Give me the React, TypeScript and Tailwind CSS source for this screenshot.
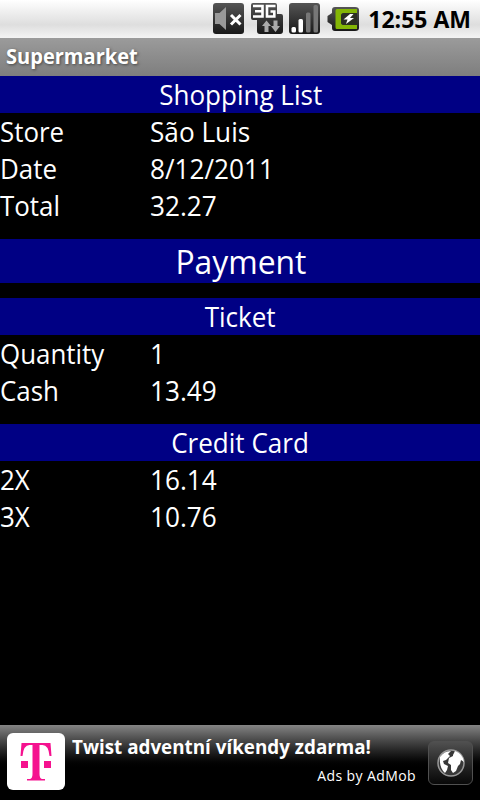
import type { ReactNode } from "react";

interface Row {
  label: string;
  value: string;
}

const purchase: Row[] = [
  { label: "Store", value: "São Luis" },
  { label: "Date", value: "8/12/2011" },
  { label: "Total", value: "32.27" },
];

const ticket: Row[] = [
  { label: "Quantity", value: "1" },
  { label: "Cash", value: "13.49" },
];

const creditCard: Row[] = [
  { label: "2X", value: "16.14" },
  { label: "3X", value: "10.76" },
];

export default function App() {
  return (
    <div className="flex h-[800px] w-[480px] flex-col overflow-hidden bg-black font-['Open_Sans','Noto_Sans',sans-serif] text-white">
      <StatusBar />
      <header className="h-[38px] shrink-0 bg-linear-to-b from-[#9b9b9b] to-[#7e7e7e] pl-1.5">
        <h1 className="origin-left scale-x-[0.955] text-[21px] leading-[36px] font-bold [text-shadow:1px_1px_3px_#444]">
          Supermarket
        </h1>
      </header>
      <main className="flex-1">
        <Section title="Shopping List" rows={purchase} />
        <h2 className="my-[15px] h-11 bg-[#000084] text-center text-[33px] leading-[46px]">
          <span className="ml-px inline-block scale-x-[0.965]">Payment</span>
        </h2>
        <Section title="Ticket" rows={ticket} />
        <div className="h-[15px]" />
        <Section title="Credit Card" rows={creditCard} />
      </main>
      <AdBanner />
    </div>
  );
}

function Section({ title, rows }: { title: string; rows: Row[] }) {
  return (
    <section className="text-[28px] leading-[36px]">
      <h3 className="h-[37px] bg-[#000084] text-center">
        <span className="ml-px inline-block scale-x-[0.93]">{title}</span>
      </h3>
      {rows.map((row) => (
        <div key={row.label} className="flex h-[37px]">
          <span className="w-[150px] origin-left scale-x-[0.925]">{row.label}</span>
          <span className="origin-left scale-x-[0.935]">{row.value}</span>
        </div>
      ))}
    </section>
  );
}

function StatusBar() {
  return (
    <div className="flex h-[38px] shrink-0 items-start justify-end bg-linear-to-b from-white via-[#dedede] via-65% to-[#f4f4f4] pr-[9px] text-black">
      <div className="flex gap-1.5">
        <StatusIcon>
          <rect x="1" y="3" width="31" height="31" rx="3" fill="url(#tile)" />
          <path d="M3 13h4.500l6.500-6v23l-6.500-6H3z" fill="#999" />
          <path d="m19 15 9.500 9.500m0-9.500L19 24.500" stroke="#fff" strokeWidth="3" />
        </StatusIcon>
        <StatusIcon>
          <path
            d="M3 3h22q2 0 2 2v9h4q2 0 2 2v15q0 3-3 3H10q-3 0-3-3V20H3q-2 0-2-2V5q0-2 2-2z"
            fill="url(#tile)"
          />
          <path
            d="M3 6h9.500v10.500H3M5 11.200h7.500M25.500 6H17v10.500h7.300v-5H20.500"
            fill="none"
            stroke="#fff"
            strokeWidth="2.600"
          />
          <path
            d="m16.500 20.500 4.500 5.500h-2.500v6h-4v-6H12zM23.500 20.500h4V26H30l-4.500 6-4.500-6h2.500z"
            fill="#aaa"
          />
        </StatusIcon>
        <StatusIcon>
          <rect x="1" y="3" width="31" height="31" rx="3" fill="url(#tile)" />
          <rect x="3.500" y="27" width="4.500" height="5.500" rx="1.500" fill="#fff" />
          <rect x="10.500" y="19" width="4.500" height="13.500" rx="1.500" fill="#fff" />
          <rect x="18" y="12.500" width="4.500" height="20" rx="1.500" fill="#777" />
          <rect x="25.500" y="5" width="4.500" height="27.500" rx="1.500" fill="#777" />
        </StatusIcon>
        <StatusIcon>
          <path
            d="M9 7h20q4 0 4 3v18q0 3-4 3H9q-3 0-3-3v-3l-4.500-3v-6L6 13v-3q0-3 3-3z"
            fill="url(#tile)"
          />
          <path d="M11 9h20v4H18q-3 0-3 3v6q0 3 3 3h13v4H11q-1.500 0-1.500-1.500v-17Q9.500 9 11 9z" fill="#84b606" />
          <path d="M31 13H18q-3 0-3 3v6q0 3 3 3h13z" fill="#2c2f22" />
          <path d="m24 14-6.500 5.500h4L20 24l8-6h-4l3.500-4z" fill="#fff" />
        </StatusIcon>
      </div>
      <span className="ml-[10px] text-[23px] leading-[38px] font-bold">
        12:55 AM
      </span>
    </div>
  );
}

function StatusIcon({ children }: { children: ReactNode }) {
  return (
    <svg width="32" height="38" viewBox="0 0 32 38" className="overflow-visible">
      <defs>
        <linearGradient id="tile" x1="0" y1="0" x2="0" y2="1">
          <stop offset="0" stopColor="#555" />
          <stop offset="1" stopColor="#181818" />
        </linearGradient>
      </defs>
      {children}
    </svg>
  );
}

function AdBanner() {
  return (
    <footer className="flex h-[75px] shrink-0 bg-linear-to-b from-[#858585] to-black to-60% pl-[7px]">
      <div className="mt-2 flex h-[57px] w-[58px] items-center justify-center rounded-md bg-white">
        <svg width="32" height="38" viewBox="0 0 32 38" fill="#f5128f">
          <path d="M1.500 0h29l1 13h-2q-1-11-7-11h-3v29q0 5 3 5H25v1.500H7V36h2.500q3 0 3-5V2h-3Q3.500 2 2.500 13H.5z" />
          <path d="M1 18h7v7H1zM24 18h7v7h-7z" />
        </svg>
      </div>
      <div className="ml-[7px] w-[344px]">
        <p className="mt-[9px] w-max origin-left scale-x-[0.99] text-[19px] leading-[26px] font-bold">
          Twist adventní víkendy zdarma!
        </p>
        <p className="mt-[6px] text-right text-[14px] leading-5 tracking-[0.4px]">
          Ads by AdMob
        </p>
      </div>
      <div className="mt-4 ml-3 flex h-[44px] w-[45px] items-center justify-center rounded-md border border-[#505050] bg-linear-to-b from-[#505050] to-[#080808]">
        <svg width="28" height="28" viewBox="0 0 28 28">
          <circle cx="14" cy="14" r="13" fill="#383838" stroke="#999" strokeWidth="1.500" />
          <path
            d="M3 8q4-6 11-6l-3 3 2 2-4 4-3 1 1 3 4 2-1 4-2 3q-6-5-5-16zM16 6l2-4q8 3 9 11l-3-2-1 4-2 2-2 5-3 2-2-3v-5l-3-2 1-5 4-2z"
            fill="#fff"
          />
        </svg>
      </div>
    </footer>
  );
}
